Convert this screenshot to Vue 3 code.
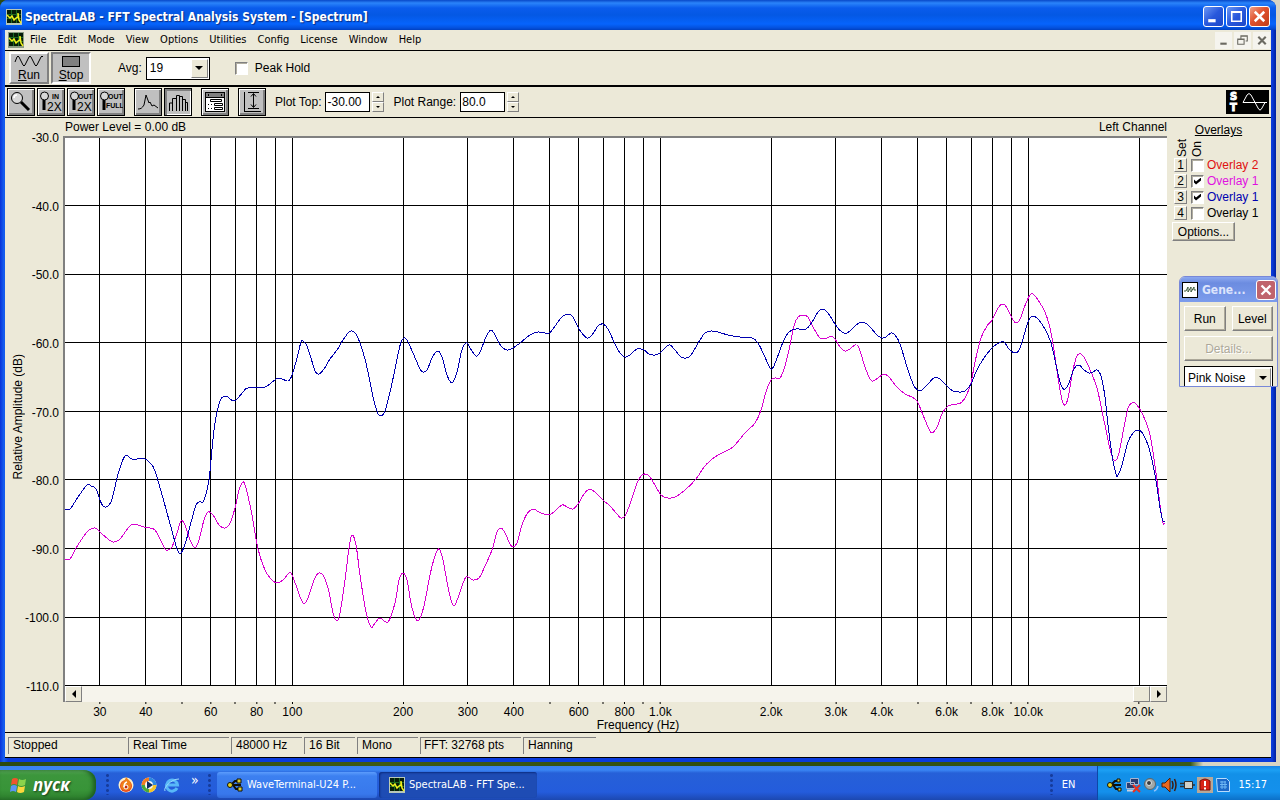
<template>
  <div class="desktop">
    <div class="window">
      <header class="titlebar">
        <svg class="app-icon" viewBox="0 0 16 16">
          <rect width="16" height="16" fill="#b8c8b8" />
          <rect x="1" y="1" width="14" height="13" fill="#061c08" />
          <path d="M1 5.500h14M1 9.500h14M5.500 1v13M10.500 1v13" stroke="#1c6a24" />
          <path d="M1 6l3 3 2-2 2 4 2-2 2-1V4l1 7 2 3" fill="none" stroke="#f2f21c" stroke-width="1.500" />
        </svg>
        <h1>SpectraLAB - FFT Spectral Analysis System - [Spectrum]</h1>
        <div class="win-buttons">
          <button aria-label="Minimize">
            <svg viewBox="0 0 18 18"><path d="M4 13h7" stroke="#fff" stroke-width="3" /></svg>
          </button>
          <button aria-label="Restore">
            <svg viewBox="0 0 18 18"><path d="M4.500 4.500h9v9h-9zM4 5h10" fill="none" stroke="#fff" stroke-width="1.500" /></svg>
          </button>
          <button class="close" aria-label="Close">
            <svg viewBox="0 0 18 18"><path d="M4.500 4.500l9 9M13.500 4.500l-9 9" stroke="#fff" stroke-width="2.400" /></svg>
          </button>
        </div>
      </header>

      <nav class="menubar">
        <svg class="app-icon" viewBox="0 0 16 16">
          <rect width="16" height="16" fill="#8c9c84" />
          <rect x="1" y="1" width="14" height="13" fill="#061c08" />
          <path d="M1 5.500h14M1 9.500h14M5.500 1v13M10.500 1v13" stroke="#1c6a24" />
          <path d="M1 6l3 3 2-2 2 4 2-2 2-1V4l1 7 2 3" fill="none" stroke="#f2f21c" stroke-width="1.500" />
        </svg>
        <a v-for="item in menu" :key="item" href="#">{{ item }}</a>
        <div class="mdi-buttons">
          <button aria-label="Minimize document">
            <svg viewBox="0 0 16 16"><path d="M5 11h6" stroke="#6b6a62" stroke-width="2" /></svg>
          </button>
          <button aria-label="Restore document">
            <svg viewBox="0 0 16 16"><path d="M6.500 6V3.500h6v5H11M6 4h7M3.500 6.500h6v5h-6zM3 7h7" fill="none" stroke="#6b6a62" /></svg>
          </button>
          <button aria-label="Close document">
            <svg viewBox="0 0 16 16"><path d="M5 4.500l7 7M12 4.500l-7 7" stroke="#6b6a62" stroke-width="2" /></svg>
          </button>
        </div>
      </nav>

      <div class="runbar">
        <button class="big">
          <svg viewBox="0 0 30 14"><path d="M1 8L3 3Q4 1 5 3L9 11Q10 13 11 11L15 3Q16 1 17 3L21 11Q22 13 23 11L27 3Q28 1 29 3" fill="none" stroke="#000" /></svg>
          <span><u>R</u>un</span>
        </button>
        <button class="big pressed">
          <svg viewBox="0 0 30 14"><rect x="6.500" y="2.500" width="17" height="10" fill="#808080" stroke="#000" /></svg>
          <span><u>S</u>top</span>
        </button>
        <label class="avg" for="avg">Avg:</label>
        <span class="combo">
          <select id="avg"><option>19</option></select>
          <i class="arrow"></i>
        </span>
        <label class="peak"><input type="checkbox" /> Peak Hold</label>
      </div>

      <div class="toolbar">
        <div class="group">
          <button aria-label="Zoom">
            <svg viewBox="0 0 24 24">
              <circle cx="8" cy="8" r="5.500" fill="#d8d8d8" stroke="#000" />
              <path d="M5 8a3 3 0 0 1 3-3" fill="none" stroke="#fff" stroke-width="1.500" />
              <path d="M12 12l8 8" stroke="#000" stroke-width="3" />
            </svg>
          </button>
          <button v-for="z in zooms" :key="z.top + z.bottom" :aria-label="z.name">
            <svg viewBox="0 0 24 24">
              <path d="M5 10v10" stroke="#000" stroke-width="3" />
              <circle cx="5.500" cy="6" r="4" fill="#d8d8d8" stroke="#000" />
              <text :x="z.topX" y="9" class="tiny">{{ z.top }}</text>
              <text v-if="z.bottom === '2X'" x="8" y="21" class="small">{{ z.bottom }}</text>
              <text v-else x="7" y="18" class="tiny">{{ z.bottom }}</text>
            </svg>
          </button>
        </div>
        <div class="group">
          <button aria-label="Line graph">
            <svg viewBox="0 0 24 24"><path d="M2 19c3 0 4-1 6-4l2-10 3 8 1-1 2 4 2-1 4 3" fill="none" stroke="#000" /></svg>
          </button>
          <button class="pressed" aria-label="Bar graph">
            <svg viewBox="0 0 24 24"><path d="M3.500 21v-8h3M6.500 21V8.500h4M10.500 21V5.500h3V21M13.500 6.500h3V21M16.500 9.500h3V21M19.500 12.500h2V21" fill="none" stroke="#000" /></svg>
          </button>
        </div>
        <div class="group">
          <button aria-label="Display options">
            <svg viewBox="0 0 24 24">
              <rect x="2.500" y="2.500" width="19" height="19" fill="#fff" stroke="#000" />
              <path d="M3 5h18" stroke="#808080" stroke-width="4" />
              <path d="M2 7.500h20M5.500 4v2M18.500 4v2" stroke="#000" />
              <path d="M7.500 9.500h11v2h-11zM11.500 13.500h8v2h-8zM11.500 17.500h8v2h-8zM5 14.500h1M8 14.500h1M5 18.500h1M8 18.500h1" fill="none" stroke="#000" />
            </svg>
          </button>
        </div>
        <div class="group">
          <button aria-label="Autoscale">
            <svg viewBox="0 0 24 24"><path d="M4.500 2v19M4 21.500h17M8 2.500h11M8 18.500h11M13.500 4v13M11 6.500l2.500-3 2.500 3M11 14.500l2.500 3 2.500-3" fill="none" stroke="#000" /></svg>
          </button>
        </div>
        <label for="top">Plot Top:</label>
        <input id="top" class="num" type="text" value="-30.00" />
        <span class="spin"><button aria-label="Raise plot top"></button><button class="down" aria-label="Lower plot top"></button></span>
        <label class="range" for="range">Plot Range:</label>
        <input id="range" class="num" type="text" value="80.0" />
        <span class="spin"><button aria-label="Raise plot range"></button><button class="down" aria-label="Lower plot range"></button></span>
        <svg class="logo" viewBox="0 0 43 24">
          <rect width="43" height="24" />
          <text x="4" y="10">S</text>
          <text x="4" y="21">T</text>
          <path d="M17 12.500h24M17 12.500L21 5Q23 2 25 5L32 18Q34 22 36 18L39 12.500" fill="none" stroke="#fff" />
        </svg>
      </div>

      <main class="main">
        <section class="chart">
          <div class="caption">
            <span>Power Level = 0.00 dB</span>
            <span>Left Channel</span>
          </div>
          <div class="y-axis">
            <span class="y-title">Relative Amplitude (dB)</span>
            <div class="y-labels">
              <span v-for="db in levels" :key="db">{{ db.toFixed(1) }}</span>
            </div>
          </div>
          <div class="plot">
            <svg viewBox="65 138 1102 548" preserveAspectRatio="none">
              <line v-for="f in freqs" :key="f" :x1="freqX(f)" :x2="freqX(f)" y1="138" y2="686" class="grid" />
              <line v-for="(db, i) in levels" :key="db" x1="65" x2="1167" :y1="levelY(i)" :y2="levelY(i)" class="grid" />
              <path :d="smooth(magenta)" class="curve magenta" />
              <path :d="smooth(blue)" class="curve blue" />
            </svg>
            <div class="scrollbar">
              <button aria-label="Scroll left"><i class="left"></i></button>
              <button class="thumb" aria-label="Scroll position"></button>
              <button aria-label="Scroll right"><i class="right"></i></button>
            </div>
          </div>
          <div class="x-axis">
            <div class="ticks">
              <span v-for="f in freqs" :key="f" class="tick" :style="{ left: percent(f) }">{{ label(f) }}</span>
            </div>
            <span class="x-title">Frequency (Hz)</span>
          </div>
        </section>

        <aside class="overlays">
          <h2>Overlays</h2>
          <div class="heads"><span>Set</span><span>On</span></div>
          <div v-for="o in overlays" :key="o.id" class="overlay">
            <button :aria-label="'Set overlay ' + o.id">{{ o.id }}</button>
            <input :id="'ov' + o.id" type="checkbox" :checked="o.on" />
            <label :for="'ov' + o.id" :class="o.tone">{{ o.name }}</label>
          </div>
          <button class="options">Options...</button>
        </aside>
      </main>

      <footer class="status">
        <span v-for="(s, i) in status" :key="s" :class="'cell c' + i">{{ s }}</span>
      </footer>
    </div>

    <section class="generator">
      <div class="gen-title">
        <svg viewBox="0 0 16 16"><rect width="16" height="16" fill="#fff" stroke="#000" stroke-width="2" /><path d="M2 9h2l2-4v5l3-5v5l3-5v3h2" fill="none" stroke="#3c5a3c" /></svg>
        <b>Gene...</b>
        <button aria-label="Close generator">
          <svg viewBox="0 0 18 18"><path d="M4.500 4.500l9 9M13.500 4.500l-9 9" stroke="#fff" stroke-width="2.400" /></svg>
        </button>
      </div>
      <div class="gen-body">
        <div class="gen-row">
          <button>Run</button>
          <button>Level</button>
        </div>
        <button class="details" disabled>Details...</button>
        <span class="combo">
          <select aria-label="Signal"><option>Pink Noise</option></select>
          <i class="arrow"></i>
        </span>
      </div>
    </section>

    <div class="taskbar">
      <button class="start">
        <svg viewBox="0 0 20 20">
          <path d="M3 4q3-2 6 0l-1 6q-3-2-6 0z" fill="#f0542c" />
          <path d="M10 4q3 2 7 0l-1 6q-4 2-7 0z" fill="#8cd44c" />
          <path d="M2 11q3-2 6 0l-1 6q-3-2-6 0z" fill="#5c94f4" />
          <path d="M9 11q3 2 7 0l-1 6q-4 2-7 0z" fill="#fcd83c" />
        </svg>
        <span>пуск</span>
      </button>
      <i class="grip"></i>
      <div class="quick">
        <svg viewBox="0 0 16 16">
          <circle cx="8" cy="8" r="7.500" fill="#fff0c8" />
          <circle cx="8" cy="9" r="6" fill="#e8481c" />
          <path d="M8 0c4 4 6 6 5 10s-9 5-10 0 4-5 5-10z" fill="#f08018" />
          <circle cx="8" cy="10" r="2" fill="#c02810" stroke="#fff" />
          <path d="M6 10q0-4 3-5" fill="none" stroke="#fff" stroke-width="1.500" />
        </svg>
        <svg viewBox="0 0 16 16">
          <circle cx="8" cy="8" r="7.500" fill="#f4f4f4" />
          <path d="M8 .500A7.500 7.500 0 0 0 .500 8H4a4 4 0 0 1 4-4z" fill="#f07c20" />
          <path d="M8 .500A7.500 7.500 0 0 1 15.500 8H12a4 4 0 0 0-4-4z" fill="#2c88e0" />
          <path d="M15.500 8A7.500 7.500 0 0 1 8 15.500V12a4 4 0 0 0 4-4z" fill="#f4c428" />
          <path d="M8 15.500A7.500 7.500 0 0 1 .500 8H4a4 4 0 0 0 4 4z" fill="#48a83c" />
          <path d="M6 4l6 4-6 4z" fill="#102c60" />
        </svg>
        <svg viewBox="0 0 16 16">
          <path d="M13 11a5.500 5.500 0 1 1 .500-3H4" fill="none" stroke="#58b8f8" stroke-width="3" />
          <path d="M1 14C-1 11 7 2 15 2" fill="none" stroke="#9cdcfc" />
        </svg>
        <span>»</span>
      </div>
      <i class="grip"></i>
      <button class="task">
        <svg viewBox="0 0 16 16"><path d="M2 8h12M4 8l4-4h3M6 8l3 4h3" fill="none" stroke="#101008" stroke-width="2" /><circle cx="3" cy="8" r="2.500" fill="#e0d020" stroke="#101008" /><path d="M10 2h4v4h-4zM11 10h4v4h-4z" fill="#d8cc30" stroke="#101008" /></svg>
        <span>WaveTerminal-U24 P...</span>
      </button>
      <button class="task active">
        <svg viewBox="0 0 16 16">
          <rect width="16" height="16" fill="#b8c8b8" />
          <rect x="1" y="1" width="14" height="13" fill="#061c08" />
          <path d="M1 5.500h14M1 9.500h14M5.500 1v13M10.500 1v13" stroke="#1c6a24" />
          <path d="M1 6l3 3 2-2 2 4 2-2 2-1V4l1 7 2 3" fill="none" stroke="#f2f21c" stroke-width="1.500" />
        </svg>
        <span>SpectraLAB - FFT Spe...</span>
      </button>
      <i class="grip lang-grip"></i>
      <span class="lang">EN</span>
      <div class="tray">
        <svg viewBox="0 0 16 16"><path d="M2 8h12M4 8l4-4h3M6 8l3 4h3" fill="none" stroke="#101008" stroke-width="2" /><circle cx="3" cy="8" r="2.500" fill="#e0d020" stroke="#101008" /><path d="M10 2h3v3h-3zM11 11h3v3h-3z" fill="#d8cc30" stroke="#101008" /></svg>
        <svg viewBox="0 0 16 16"><path d="M5.500 1.500h8v6h-8zM1.500 5.500h8v6h-8z" fill="#283c70" stroke="#a8b4d0" /><path d="M2 13.500h7" stroke="#c8d0e0" stroke-width="2" /><path d="M8 8l7 7M15 8l-7 7" stroke="#e83020" stroke-width="2" /></svg>
        <svg viewBox="0 0 16 16"><circle cx="7" cy="7" r="5.500" fill="#a0a8a8" stroke="#5c6468" /><circle cx="6" cy="6" r="2.500" fill="#383c40" stroke="#e0e4e4" /><path d="M11 14q3-1 4-5" fill="none" stroke="#8cc0f8" stroke-width="1.500" /></svg>
        <svg viewBox="0 0 16 16"><path d="M1 6h3l5-5v14l-5-5H1z" fill="#e86820" stroke="#501c08" /><path d="M11 4q2 4 0 8M13.500 2q3 6 0 12" fill="none" stroke="#401c10" stroke-width="1.500" /></svg>
        <svg viewBox="0 0 16 16"><path d="M5.500 4.500h8v7h-8z" fill="#d0d0c8" stroke="#303030" /><path d="M1 6.500h4M1 9.500h4M14 8h2" stroke="#303030" stroke-width="1.500" /></svg>
        <svg viewBox="0 0 16 16"><rect width="16" height="16" fill="#b8a898" /><path d="M3 4q5-4 10 0v9H3z" fill="#d82418" stroke="#781008" /><path d="M8 4v5M8 10.500v2" stroke="#fff" stroke-width="2" /></svg>
        <svg viewBox="0 0 16 16"><path d="M1.500 1.500h10l3 3v10h-12z" fill="#1c68c8" stroke="#b8dcfc" /><path d="M5 5h6M5 7.500h7M5 10h7M7 4v8M10 4v8" stroke="#70b8f4" /></svg>
        <time>15:17</time>
      </div>
    </div>
  </div>
</template>

<script setup>
const menu = ['File', 'Edit', 'Mode', 'View', 'Options', 'Utilities', 'Config', 'License', 'Window', 'Help']
const status = ['Stopped', 'Real Time', '48000 Hz', '16 Bit', 'Mono', 'FFT: 32768 pts', 'Hanning']
const zooms = [
  { name: 'Zoom in 2X', top: 'IN', bottom: '2X', topX: 13 },
  { name: 'Zoom out 2X', top: 'OUT', bottom: '2X', topX: 9 },
  { name: 'Zoom out full', top: 'OUT', bottom: 'FULL', topX: 9 },
]
const overlays = [
  { id: 1, name: 'Overlay 2', on: false, tone: 'red' },
  { id: 2, name: 'Overlay 1', on: true, tone: 'pink' },
  { id: 3, name: 'Overlay 1', on: true, tone: 'navy' },
  { id: 4, name: 'Overlay 1', on: false, tone: 'black' },
]

const levels = [-30, -40, -50, -60, -70, -80, -90, -100, -110]
const freqs = [
  30, 40, 50, 60, 70, 80, 90,
  100, 200, 300, 400, 500, 600, 700, 800, 900,
  1000, 2000, 3000, 4000, 5000, 6000, 7000, 8000, 9000,
  10000, 20000,
]

// log frequency axis, 368 units per decade
function freqX(f) {
  return 292.3 + 368 * Math.log10(f / 100)
}
function levelY(i) {
  return 136.9 + 68.6 * i
}
function percent(f) {
  return ((freqX(f) - 65) / 1102) * 100 + '%'
}
function label(f) {
  if ([5, 7, 9].includes(Number(String(f)[0]))) return ''
  return f < 1000 ? String(f) : (f / 1000).toFixed(1) + 'k'
}

const blue = [
  65, 509, 70, 509, 78, 497, 87, 485, 91, 486, 96, 489, 103, 506, 111, 502, 118, 474, 125, 456, 132, 459, 145, 459, 150, 463,
  156, 474, 172, 531, 177, 549, 181, 553, 186, 541, 195, 508, 199, 502, 203, 502, 206, 494, 209, 480, 211, 460,
  214, 430, 217, 412, 221, 399, 226, 396, 230, 399, 234, 401, 238, 398, 243, 392, 248, 388, 265, 387, 272, 382,
  279, 378, 288, 381, 292, 375, 297, 358, 301, 342, 303, 341, 307, 346, 311, 358, 315, 371, 319, 374, 324, 369,
  330, 359, 337, 350, 343, 340, 349, 332, 352, 331, 356, 334, 360, 343, 366, 363, 373, 397, 377, 411, 380, 416,
  385, 411, 391, 388, 397, 359, 401, 342, 404, 338, 407, 340, 413, 353, 420, 369, 423, 372, 427, 370, 433, 356,
  438, 351, 442, 357, 447, 375, 452, 383, 457, 372, 461, 353, 464, 345, 467, 343, 470, 348, 476, 356, 480, 352,
  486, 337, 491, 330, 495, 335, 501, 346, 507, 350, 513, 348, 520, 343, 530, 335, 538, 332, 549, 333, 555, 326,
  562, 317, 568, 314, 573, 317, 579, 329, 587, 338, 592, 335, 598, 326, 603, 324, 608, 329, 615, 344, 620, 353,
  625, 357, 630, 355, 637, 349, 644, 350, 649, 354, 655, 355, 660, 353, 666, 347, 670, 345, 675, 350, 681, 357,
  686, 358, 691, 355, 700, 340, 705, 333, 711, 331, 718, 332, 728, 335, 740, 337, 752, 338, 758, 343, 764, 355,
  769, 366, 772, 369, 776, 361, 783, 342, 789, 332, 796, 329, 806, 329, 812, 322, 818, 312, 823, 309, 828, 313,
  837, 327, 842, 332, 847, 333, 853, 328, 859, 323, 865, 323, 870, 327, 877, 335, 882, 338, 886, 337, 891, 333,
  895, 335, 900, 344, 908, 370, 914, 386, 918, 390, 922, 390, 928, 384, 934, 378, 940, 379, 946, 385, 953, 391,
  960, 392, 965, 391, 971, 384, 976, 372, 982, 361, 992, 348, 999, 343, 1004, 342, 1009, 349, 1015, 353, 1020, 348,
  1027, 325, 1030, 318, 1033, 316, 1038, 319, 1045, 329, 1051, 343, 1055, 360, 1059, 378, 1062, 387, 1065, 389,
  1069, 383, 1074, 369, 1079, 365, 1084, 370, 1089, 373, 1093, 372, 1097, 370, 1101, 376, 1105, 397, 1108, 425,
  1112, 455, 1116, 474, 1118, 475, 1122, 465, 1128, 442, 1133, 433, 1138, 430, 1143, 434, 1149, 448, 1153, 465,
  1157, 487, 1160, 508, 1163, 521, 1165, 521,
]
const magenta = [
  65, 559, 70, 559, 76, 548, 87, 532, 95, 528, 101, 533, 108, 539, 113, 542, 119, 540, 126, 531, 131, 525, 138, 525,
  144, 527, 150, 528, 155, 530, 160, 539, 165, 549, 168, 550, 172, 547, 177, 533, 181, 521, 185, 525, 190, 540,
  195, 548, 199, 540, 204, 520, 208, 512, 213, 515, 219, 525, 225, 528, 230, 523, 235, 508, 239, 490, 243, 482,
  246, 488, 252, 515, 258, 549, 265, 570, 271, 579, 277, 583, 283, 580, 289, 573, 292, 575, 297, 588, 303, 603,
  308, 598, 314, 580, 319, 573, 324, 577, 329, 592, 333, 613, 337, 621, 340, 613, 345, 580, 349, 548, 352, 535,
  356, 545, 360, 575, 366, 612, 371, 627, 375, 623, 380, 618, 388, 622, 395, 603, 399, 580, 403, 573, 407, 580,
  412, 608, 418, 621, 424, 606, 430, 575, 435, 556, 439, 549, 443, 560, 449, 592, 454, 606, 460, 592, 466, 577,
  473, 580, 479, 578, 485, 566, 492, 550, 497, 532, 501, 528, 505, 533, 510, 544, 513, 547, 517, 543, 522, 525,
  527, 514, 533, 509, 539, 512, 548, 515, 554, 512, 562, 505, 567, 507, 573, 509, 578, 504, 584, 494, 590, 489,
  597, 494, 604, 501, 610, 506, 617, 514, 621, 518, 625, 516, 630, 504, 637, 483, 641, 476, 645, 474, 650, 477,
  656, 487, 661, 495, 668, 498, 675, 497, 685, 490, 696, 479, 704, 467, 711, 460, 718, 455, 728, 450, 734, 446,
  745, 433, 755, 423, 761, 410, 766, 392, 771, 380, 775, 378, 780, 378, 784, 369, 789, 350, 794, 326, 798, 317,
  803, 315, 808, 317, 813, 327, 819, 337, 823, 339, 827, 338, 831, 336, 835, 339, 840, 347, 845, 351, 850, 349,
  855, 345, 859, 348, 865, 367, 870, 379, 873, 381, 878, 378, 884, 374, 889, 377, 896, 386, 905, 394, 912, 397,
  917, 401, 921, 410, 928, 427, 932, 433, 937, 427, 942, 414, 948, 406, 957, 404, 962, 402, 967, 394, 971, 383,
  975, 362, 981, 338, 987, 326, 992, 320, 998, 308, 1003, 304, 1007, 308, 1012, 318, 1016, 323, 1020, 319,
  1026, 303, 1030, 295, 1033, 294, 1038, 300, 1045, 312, 1050, 328, 1054, 350, 1058, 378, 1062, 400, 1065, 405,
  1068, 398, 1073, 370, 1077, 356, 1081, 354, 1085, 359, 1091, 372, 1097, 388, 1102, 411, 1107, 435, 1111, 453,
  1115, 461, 1119, 453, 1124, 427, 1128, 408, 1132, 403, 1136, 404, 1142, 413, 1149, 431, 1153, 452, 1157, 480,
  1160, 505, 1163, 523, 1165, 523,
]

// Catmull-Rom through a flat x, y list
function smooth(flat) {
  const p = []
  for (let i = 0; i < flat.length; i += 2) p.push([flat[i], flat[i + 1]])
  let d = `M${p[0][0]} ${p[0][1]}`
  for (let i = 0; i < p.length - 1; i++) {
    const a = p[i - 1] || p[i]
    const b = p[i]
    const c = p[i + 1]
    const e = p[i + 2] || c
    d += `C${b[0] + (c[0] - a[0]) / 6} ${b[1] + (c[1] - a[1]) / 6} ${c[0] - (e[0] - b[0]) / 6} ${c[1] - (e[1] - b[1]) / 6} ${c[0]} ${c[1]}`
  }
  return d
}
</script>

<style>
html, body, #app { height: 100%; }
</style>

<style scoped>
.desktop {
  position: relative;
  height: 100%;
  display: flex; flex-direction: column;
  background: linear-gradient(90deg, #2c4a10, #3f5a14 30%, #2e4c10 60%, #3a5a18 93%, #d8d4c4 94%);
  font: 12px/14px "Liberation Sans", Arial, sans-serif;
  color: #000;
}
.desktop *, .desktop *::before, .desktop *::after { box-sizing: border-box; }
button, input, select { font: inherit; color: inherit; margin: 0; padding: 0; border-radius: 0; }
svg { display: block; flex: none; }

.window {
  flex: 1; min-height: 0;
  display: flex; flex-direction: column;
  margin: 0 4px 4px 0;
  padding: 0 5px 4px;
  border-radius: 8px 8px 0 0;
  background: linear-gradient(90deg, #0831d9, #1660f0 4px, #0a3bdc 8px, #0a3bdc calc(100% - 4px), #0020a0);
}

.titlebar {
  height: 30px;
  display: flex; align-items: center;
  margin: 0 -5px; padding: 3px 6px 0;
  border-radius: 8px 8px 0 0;
  background: linear-gradient(#0848c8, #2a84fa 3px, #0a5cec 8px, #0458e4 15px, #0664fc 24px, #0450dc 28px, #0040c0);
  color: #fff;
}
.app-icon { width: 16px; height: 16px; }
.titlebar h1 {
  flex: 1;
  margin: 0 0 0 3px;
  font: bold 12px/16px "DejaVu Sans Condensed", "DejaVu Sans", sans-serif;
  text-shadow: 1px 1px 1px #0a2c80;
}
.win-buttons { display: flex; gap: 2px; }
.win-buttons button {
  width: 21px; height: 21px;
  border: 1px solid #fff; border-radius: 3px;
  background: linear-gradient(135deg, #6c98f4, #2858dc 50%, #1c48c8);
}
.win-buttons .close { background: linear-gradient(135deg, #f0a088, #e0502c 45%, #c03c18); }

.menubar {
  height: 20px;
  display: flex; align-items: center; gap: 1px;
  padding-left: 3px;
  background: #ece9d8;
  font: 11px/14px "DejaVu Sans Condensed", "DejaVu Sans", sans-serif;
}
.menubar a { color: #000; text-decoration: none; padding: 0 5px; }
.mdi-buttons { display: flex; gap: 2px; margin-left: auto; padding-right: 1px; }
.mdi-buttons button { width: 17px; height: 17px; border: 0; background: #f5f4ee; }

.runbar {
  height: 37px;
  display: flex; align-items: center;
  padding-left: 4px;
  border-top: 1px solid #000; border-bottom: 2px solid #000;
  background: #ece9d8;
}
.big {
  width: 40px; height: 32px;
  display: flex; flex-direction: column; align-items: center;
  margin-right: 2px;
  border: 2px solid; border-color: #fff #808080 #808080 #fff;
  background: #c0c0c0;
  line-height: 14px;
}
.big svg { width: 30px; height: 14px; }
.big.pressed { border-color: #808080 #fff #fff #808080; }
.avg { margin: 0 4px 0 25px; }
.combo { position: relative; display: block; border: 1px solid #000; background: #fff; }
.combo select {
  appearance: none;
  width: 100%; height: 100%;
  padding-left: 3px;
  border: 0; background: #fff;
}
.runbar .combo { width: 64px; height: 23px; }
.arrow {
  position: absolute; top: 1px; right: 1px; bottom: 1px;
  width: 17px;
  display: flex; align-items: center; justify-content: center;
  border: 1px solid; border-color: #fff #808080 #808080 #fff;
  background: #ece9d8;
  pointer-events: none;
}
.arrow::after {
  content: "";
  border: 4px solid transparent; border-top-color: #000; border-bottom: 0;
}
input[type="checkbox"] {
  appearance: none;
  flex: none;
  width: 13px; height: 13px;
  border: 1px solid; border-color: #808080 #fff #fff #808080;
  background: #fff;
  box-shadow: inset 1px 1px #b0ada0;
}
input[type="checkbox"]:checked::after {
  content: "";
  display: block;
  width: 7px; height: 7px;
  margin: 2px;
  background: #000;
  clip-path: polygon(0 29%, 29% 57%, 100% 0, 100% 43%, 29% 100%, 0 71%);
}
.peak { display: flex; align-items: center; gap: 7px; margin-left: 25px; }

.toolbar {
  height: 31px;
  display: flex; align-items: center;
  padding: 0 2px;
  border-bottom: 1px solid #000;
  background: #ece9d8;
}
.group { display: flex; gap: 2px; margin-right: 9px; }
.group button {
  width: 28px; height: 28px;
  border: 1px solid #000;
  background: #c0c0c0;
  box-shadow: inset 1px 1px #fff, inset -2px -2px #808080;
}
.group button svg { width: 24px; height: 24px; margin: 1px; }
.group .pressed { box-shadow: inset 2px 2px #808080, inset -1px -1px #fff; }
.tiny { font: bold 7px "Liberation Sans", sans-serif; }
.small { font: 12px "Liberation Sans", sans-serif; }
.num {
  width: 45px; height: 20px;
  margin-left: 4px; padding-left: 1px;
  border: 1px solid #000;
  background: #fff;
}
.spin { display: flex; flex-direction: column; margin-left: 2px; }
.spin button {
  width: 12px; height: 10px;
  display: flex; align-items: center; justify-content: center;
  border: 1px solid; border-color: #fff #808080 #808080 #fff;
  background: #ece9d8;
}
.spin button::after { content: ""; border: 2px solid transparent; border-bottom-color: #000; border-top: 0; }
.spin .down::after { border: 2px solid transparent; border-top-color: #000; border-bottom: 0; }
.range { margin-left: 9px; }
.logo { width: 43px; height: 24px; margin-left: auto; }
.logo text { font: bold 10px "DejaVu Sans", sans-serif; fill: #fff; stroke: #fff; }

.main { flex: 1; min-height: 0; display: flex; background: #ece9d8; }
.chart {
  flex: 1; min-width: 0;
  display: grid;
  grid-template: 18px minmax(0, 1fr) 30px / 58px minmax(0, 1fr);
}
.caption {
  grid-column: 2;
  display: flex; justify-content: space-between;
  padding: 2px 0 0 2px;
}
.y-axis {
  display: flex; justify-content: space-between; align-items: center;
  padding: 0 4px 16px 6px;
}
.y-title { writing-mode: vertical-rl; transform: rotate(180deg); padding-bottom: 12px; }
.y-labels {
  align-self: stretch;
  display: flex; flex-direction: column; justify-content: space-between;
  margin: -5px 0 -8px;
  text-align: right;
}
.plot {
  display: flex; flex-direction: column;
  border: 2px solid #808080; border-width: 2px 0 0 2px;
  background: #fff;
}
.plot > svg { flex: 1; min-height: 0; width: 100%; }
.grid { stroke: #000; stroke-width: 1px; vector-effect: non-scaling-stroke; shape-rendering: crispEdges; }
.curve { fill: none; stroke-width: 1px; vector-effect: non-scaling-stroke; shape-rendering: crispEdges; }
.blue { stroke: #0000b0; }
.magenta { stroke: #d800d0; }
.scrollbar {
  height: 16px;
  display: flex;
  background: #f6f4ec;
}
.scrollbar button {
  width: 17px; height: 16px;
  display: flex; align-items: center; justify-content: center;
  border: 1px solid; border-color: #fff #808080 #808080 #fff;
  background: #ece9d8;
}
.scrollbar .thumb { margin-left: auto; }
.left { border: 4px solid transparent; border-right-color: #000; border-left: 0; }
.right { border: 4px solid transparent; border-left-color: #000; border-right: 0; }
.x-axis { grid-column: 2; margin-left: 2px; text-align: center; }
.ticks { position: relative; height: 17px; }
.tick {
  position: absolute; top: 0;
  display: flex; flex-direction: column; align-items: center;
  line-height: 12px;
  transform: translateX(-50%);
}
.tick::before { content: ""; width: 1px; height: 2px; margin-bottom: 2px; background: #000; }
.x-title { display: block; padding-left: 44px; line-height: 13px; }

.overlays { width: 104px; padding-left: 5px; }
.overlays h2 { margin: 5px 0 0; padding-right: 6px; font: inherit; text-align: center; text-decoration: underline; }
.heads { display: flex; gap: 1px; height: 20px; padding-left: 3px; }
.heads span { writing-mode: vertical-rl; transform: rotate(180deg); text-align: left; }
.overlay { display: flex; align-items: center; height: 16px; padding-left: 2px; }
.overlay button {
  width: 13px; height: 14px;
  border: 1px solid; border-color: #fff #808080 #808080 #fff;
  background: #ece9d8;
  line-height: 12px;
}
.overlay input { margin: 0 3px 0 4px; }
.red { color: #e01010; }
.pink { color: #e010e0; }
.navy { color: #0000b0; }
.black { color: #000; }
.options {
  width: 63px; height: 19px;
  margin-top: 1px;
  border: 1px solid; border-color: #fff #808080 #808080 #fff;
  background: #ece9d8;
  box-shadow: inset -1px -1px #aca899;
}

.status {
  height: 26px;
  display: flex;
  padding: 4px 3px;
  border-top: 1px solid #000; border-bottom: 1px solid #000;
  background: #ece9d8;
}
.cell {
  height: 17px;
  margin-right: 2px; padding: 0 4px;
  border: 1px solid #808080; border-width: 1px 0 0 1px;
}
.c0 { width: 118px; }
.c1 { width: 101px; }
.c2 { width: 71px; }
.c3 { width: 51px; }
.c4 { width: 61px; }
.c5 { width: 101px; padding-left: 3px; }
.c6 { width: 73px; }

/* floating generator palette, its lower part is cut off */
.generator {
  position: absolute; top: 276px; right: 2px;
  width: 99px; height: 111px;
  overflow: hidden;
  border: 1px solid #7888d8;
  border-radius: 6px 6px 0 0;
  background: #ece9d8;
}
.gen-title {
  height: 25px;
  display: flex; align-items: center;
  padding: 0 1px 0 2px;
  background: linear-gradient(#8ca8f0, #6c8ce0 6px, #7c9cec);
  color: #dce4fc;
}
.gen-title > svg { width: 16px; height: 16px; }
.gen-title b { flex: 1; margin-left: 4px; font: bold 12px/16px "DejaVu Sans Condensed", "DejaVu Sans", sans-serif; }
.gen-title button { width: 20px; height: 20px; border: 1px solid #fff; border-radius: 3px; background: #c0646c; }
.gen-body { display: flex; flex-direction: column; gap: 5px; padding: 4px; }
.gen-row { display: flex; gap: 6px; }
.gen-row button, .details {
  flex: 1;
  height: 25px;
  border: 1px solid; border-color: #fff #808080 #808080 #fff;
  background: #ece9d8;
  box-shadow: inset -1px -1px #aca899;
}
.details { flex: none; color: #aca899; text-shadow: 1px 1px #fff; }
.gen-body .combo { height: 24px; }

.taskbar {
  height: 34px; flex: none;
  display: flex; align-items: center;
  background: linear-gradient(#3c80f0, #3a86f4 4px, #2660d8 7px, #245cdc 26px, #1c48b0);
  color: #fff;
  font: 11px/14px "DejaVu Sans Condensed", "DejaVu Sans", sans-serif;
}
.start {
  width: 96px; height: 30px;
  display: flex; align-items: center; align-self: flex-end; gap: 4px;
  padding-left: 9px;
  border: 0; border-radius: 0 12px 12px 0;
  background: linear-gradient(#5cac5c, #3c963c 5px, #389438 20px, #2c7c2c);
  box-shadow: inset -3px 0 4px #1c5c20;
  color: #fff;
  font: italic bold 17px/20px "Open Sans", sans-serif;
  text-shadow: 1px 1px 2px #1c401c;
}
.start svg { width: 20px; height: 20px; }
.grip { width: 5px; height: 22px; margin: 2px 0 0 9px; background: radial-gradient(circle, #163c9c 1px, transparent 2px) 0 0 / 5px 5px; }
.quick { width: 97px; display: flex; align-items: center; gap: 7px; padding: 4px 0 0 8px; }
.quick svg { width: 16px; height: 16px; }
.quick span { margin: -10px 0 0 4px; font-size: 14px; }
.quick + .grip { margin-left: 0; }
.task {
  width: 160px; height: 26px;
  display: flex; align-items: center; gap: 4px;
  margin: 4px 0 0 5px; padding-left: 10px;
  border: 0; border-radius: 3px;
  background: linear-gradient(#5c9cfc, #3c80f0 4px, #3878ec 22px, #3068d8);
  color: #fff;
}
.task svg { width: 16px; height: 16px; }
.task.active { width: 158px; margin-left: 2px; background: #1e4cb4; box-shadow: inset 1px 1px 2px #0c2c80; }
.lang-grip { margin-left: auto; }
.lang { margin: 3px 22px 0 8px; }
.tray {
  height: 34px;
  display: flex; align-items: center; gap: 2px;
  padding: 4px 13px 0 9px;
  border-left: 1px solid #0c48a8;
  background: linear-gradient(#1884e8, #1ca0f4 4px, #1290e8 8px, #1490ec 26px, #0c70c8);
}
.tray svg { width: 16px; height: 16px; }
.tray time { margin-left: 5px; }
</style>
